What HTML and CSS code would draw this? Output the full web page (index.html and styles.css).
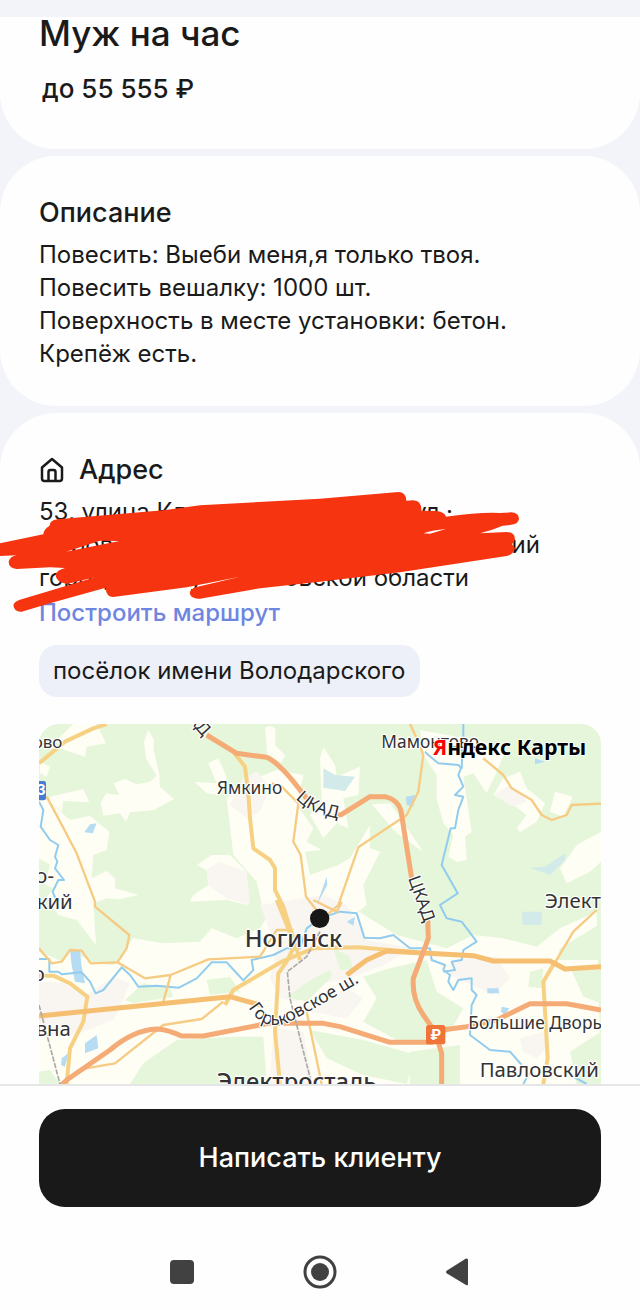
FILE: index.html
```html
<!DOCTYPE html>
<html lang="ru">
<head>
<meta charset="utf-8">
<meta name="viewport" content="width=device-width, initial-scale=1">
<title>Муж на час</title>
<link rel="stylesheet" href="styles.css">
</head>
<body>
<main class="feed">
  <section class="card card-top">
    <h1 class="title">Муж на час</h1>
    <p class="price">до 55 555 ₽</p>
  </section>

  <section class="card card-description">
    <h2 class="heading">Описание</h2>
    <p class="text">Повесить: Выеби меня,я только твоя.<br>Повесить вешалку: 1000 шт.<br>Поверхность в месте установки: бетон.<br>Крепёж есть.</p>
  </section>

  <section class="card card-address">
    <h2 class="heading heading-icon">
      <svg class="home" viewBox="0 0 24 26" aria-hidden="true"><path d="M2 10.500 12 2l10 8.500V21.500a2.500 2.500 0 0 1-2.500 2.500h-15A2.500 2.500 0 0 1 2 21.500Z"/><path d="M8.500 24V15a2 2 0 0 1 2-2h3a2 2 0 0 1 2 2v9"/></svg>
      Адрес
    </h2>
    <div class="address text">
      <p class="line line-street"><span>53, улица Кл</span><span>ул ·</span></p>
      <p class="line line-town"><span>тров</span><span>ский</span></p>
      <p class="line line-region"><span>город</span><span>у</span><span>овской области</span></p>
    </div>
    <a class="route" href="#map">Построить маршрут</a>
    <svg class="scribble" viewBox="0 150 1560 372" aria-hidden="true">
      <path fill-rule="evenodd" d="M-5 311 130 283Q131 268 148 258Q150 240 172 238L490 211 600 196 960 176 1195 156Q1218 156 1219 182L1240 181Q1265 182 1264 212L1310 213Q1334 216 1338 230Q1440 216 1500 219L1535 217Q1557 219 1557 237Q1555 253 1530 255L1508 257Q1475 271 1440 280L1520 276Q1546 276 1545 300L1536 313 1545 325Q1540 344 1520 348L1200 397 960 425 780 445 600 476Q574 478 569 460Q570 446 590 441L720 410 560 442 340 471Q318 470 317 443L150 490 65 515Q43 517 40 495Q43 484 60 479L285 412 200 432Q165 425 167 402Q172 390 195 384L150 382 50 387Q26 384 26 365Q30 349 50 346L-5 348ZM198 335 358 303 300 302ZM1270 280 1290 281 1338 267Q1300 270 1270 280Z"/>
    </svg>
    <div><span class="chip">посёлок имени Володарского</span></div>

    <svg id="map" class="map" viewBox="27 27 1686 1080" preserveAspectRatio="xMidYMin slice" role="img" aria-label="Карта: Ногинск">
      <rect class="green" x="27" y="27" width="1686" height="1080"/>
      <g class="field">
        <path d="M80 75 130 27H200L228 85 170 95 165 125 90 100ZM30 140 60 155 50 185 30 175ZM60 245 160 222 178 262 100 258 95 290 60 262Z"/>
        <path d="M355 45 372 75 370 100 388 180 390 215 432 252 372 285 300 292 288 320 270 295 220 302 212 265 228 235 268 240 250 205 285 192 320 208 360 200 380 182 348 130 342 80Z"/>
        <path d="M27 240 60 262 120 315 180 302 238 350 230 405 190 420 185 490 230 468 255 490 255 520 325 540 270 553 230 550 190 565 198 690 140 615 85 600 40 530 60 450 27 430Z"/>
        <path d="M493 200 530 235 570 240 590 185 565 130 535 145 560 205ZM500 450 545 420 600 420 650 470 650 570 590 555 480 560 490 540 535 510 530 465Z"/>
        <path d="M705 38Q725 25 737 45L735 90 765 120 755 143 712 120ZM880 97 915 150 920 185 990 155 985 240 940 250 955 340 920 325 880 370 840 300 875 260 870 130Z"/>
        <path d="M590 250 650 200 740 165 820 180 800 270 850 340 830 380 875 405 825 410 840 480 925 450 960 430 1020 330 1020 400 1050 410 1000 510 1010 570 920 640 700 590 680 500 610 420ZM1025 268 1080 265 1180 410 1100 355Z"/>
        <path d="M1170 45 1360 80 1430 100 1400 170 1370 235 1330 175 1300 185 1325 350 1305 365 1310 435 1280 440 1255 425 1270 360 1240 325 1220 250 1220 180 1180 120ZM1390 240 1420 190 1470 170 1490 220 1545 265 1520 320 1470 352 1460 340 1490 300 1450 270ZM1575 230 1628 245 1600 305 1560 290ZM1713 350 1640 390 1620 420 1590 460 1610 505 1680 470 1713 440Z"/>
        <path d="M27 710 100 740 125 705 190 745 250 750 310 670 400 685 510 680 545 640 620 670 690 640 740 560 900 530 970 580 1100 660 1250 700 1330 660 1420 670 1520 695 1590 640 1700 590 1713 1107H27Z"/>
      </g>
      <g class="town">
        <path d="M27 800 100 805 170 840 250 785 300 805 270 875 250 915 150 955 27 970ZM530 465 565 440 650 470 660 570 590 550 535 510ZM640 190 680 170 720 215 690 290 650 310 600 270Z"/>
        <path d="M690 570 880 540 950 570 1010 675 1150 700 1060 750 960 790 850 810 800 860 750 850 720 790 740 700ZM840 890 950 820 1000 850 950 910ZM1265 735 1400 725 1440 790 1390 840 1260 780ZM1470 970 1540 950 1550 1000 1520 1030 1480 1010ZM1390 240 1440 210 1470 230 1490 260 1450 275ZM730 940 820 950 850 1107H720Z"/>
      </g>
      <g class="green">
        <path d="M27 500 70 520 40 560 27 555ZM285 855 340 805 420 820 430 845 310 865ZM530 795 600 785 630 830 540 840ZM300 1107 340 1045 440 975 600 965 700 965 710 1107ZM27 1070 60 1065 90 1107H27ZM770 845 850 790 900 765 905 785 830 860ZM1000 785 1080 760 1190 735 1220 830 1300 880 1260 950 1190 990 1100 975 1000 920 1040 850ZM840 945 1000 975 1160 1020 1130 1107 1000 1080 890 1030ZM1140 1010 1290 990 1290 1107H1140ZM1500 770 1540 760 1535 820 1495 815ZM1620 1010 1713 950V1107H1640ZM1590 700 1713 625V735H1580ZM1620 755 1713 765V865L1660 845ZM910 700 960 725 970 765 930 765Z"/>
      </g>
      <g class="water">
        <path d="M180 328 200 325 188 355 163 352ZM120 705 150 705 155 755 165 805 135 800 125 750ZM165 985 200 960 205 1000 165 1015ZM95 1030 115 1015 105 1055 93 1050ZM890 485 892 510 860 570ZM1372 820 1405 820 1408 835H1372ZM1415 875 1438 880 1425 900 1413 890ZM950 620 975 605 970 632ZM1515 130 1545 140 1515 148ZM1128 245 1155 240 1150 275 1130 270Z"/>
      </g>
      <path class="lake" d="M880 160 915 180 975 185 945 228 880 218ZM1500 458 1545 455 1605 415 1605 435 1560 480ZM1475 590H1535V630H1478Z"/>
      <g class="river">
        <path d="M27 260 40 285 32 335 60 375 85 390 75 425 82 440 75 460 102 495 85 495 68 530 80 560M27 732H58V770H85L95 778 155 772 180 800 197 835 220 825 275 757 300 780 325 815 380 812 447 818 500 790 545 742H590L625 780 640 796 670 765 665 735 730 720 770 700 810 700 830 640 870 610 930 590 980 595 1003 668 1050 670 1090 660 1140 700 1200 700 1205 735 1245 750 1240 765 1260 780 1255 800 1270 825 1285 795 1325 790 1325 825 1340 840 1325 870 1320 960 1380 1005 1440 1010 1475 1050"/>
        <path d="M1300 27V65L1285 80 1297 110 1295 160 1285 150 1225 145 1195 120 1185 110M1295 155 1285 180 1300 215 1275 240 1300 245 1285 285 1275 340H1262L1235 450 1283 535 1230 570 1250 610 1295 620 1340 680 1300 705 1295 735 1265 740 1275 765 1240 770M1480 1107 1500 1070M1630 1085 1670 1107"/>
      </g>
      <g class="minor">
        <path d="M27 700 65 745 95 740 120 705 155 707 182 745 262 742 345 790 422 780 535 733 690 725 740 645H790M422 780 400 860M1140 27 1165 80 1180 120 1165 230 1130 300 985 397 925 570 880 610 855 580 828 545 812 420 790 380 805 265 755 215 725 205M1360 130 1420 180 1445 220 1505 255 1535 300 1565 315 1610 300 1625 270 1713 266M1700 585 1630 650 1565 760M150 1063 255 1045 400 930 515 912 580 860M830 890 875 1107M850 555 920 590 935 560"/>
      </g>
      <path class="minor" d="M50 245 85 310 140 415 195 560 195 575 298 660 290 700 262 742"/>
      <g class="medium">
        <path d="M27 145 105 80 190 40 230 27M610 110 645 155 655 235 660 310 670 400 720 435 735 460 735 525 760 575 810 735M740 555 795 690 770 740 745 775 735 950 750 1107M27 782H70L120 805 172 845 160 920 120 1000 110 1107M585 870 610 825 755 740 850 700 985 697 1140 710M1540 1107 1553 1030 1540 800 1575 740"/>
      </g>
      <g class="main"><path d="M27 903 600 845 690 870M950 780 1010 735 1070 708 1330 722 1390 738H1560L1605 762 1713 755"/></g>
      <g class="highway">
        <path d="M530 60 620 115 710 127Q750 145 810 225L830 250M910 305 935 298 1020 245H1065Q1110 255 1115 300L1145 490M1193 610 1195 670 1150 790Q1145 850 1180 900L1215 950M27 1175 110 1095 240 1005Q310 945 380 942 410 943 455 963H520L715 925 880 925 930 935 1080 982H1210M1230 946 1310 935 1400 915 1500 866H1610L1713 885M1215 950 1235 1015V1107"/>
      </g>
      <path class="rail" d="M27 870 90 1107M870 650 830 725 772 770 780 850 845 1107"/>
      <circle class="dot" cx="869" cy="610" r="29"/>
      <rect class="toll" x="1188" y="930" width="58" height="58" rx="8"/>
      <text class="badge" x="1217" y="975" text-anchor="middle">₽</text>
      <rect class="shield" x="5" y="198" width="43" height="58" rx="7"/>
      <text class="badge" x="19" y="241">3</text>
      <g class="label">
        <text x="8" y="99" class="l-sm">ово</text>
        <text x="561" y="236" class="l-md">Ямкино</text>
        <text x="1054" y="98" class="l-md">Мамонтово</text>
        <text x="16" y="503" class="l-lg">о-</text>
        <text x="20" y="583" class="l-lg">кий</text>
        <text x="8" y="797" class="l-lg">о</text>
        <text x="17" y="963" class="l-lg">вна</text>
        <text x="644" y="697" class="l-xl">Ногинск</text>
        <text x="1544" y="580" class="l-lg">Электрогорск</text>
        <text x="1315" y="943" class="l-md">Большие Дворы</text>
        <text x="1349" y="1086" class="l-lg">Павловский Посад</text>
        <text x="560" y="1126" class="l-xl">Электросталь</text>
        <path id="ring-north" class="guide" d="M797 250Q845 305 960 315"/>
        <text class="l-md"><textPath href="#ring-north">ЦКАД</textPath></text>
        <text class="l-md" transform="translate(1134 490) rotate(70)">ЦКАД</text>
        <text class="l-md" transform="translate(424 -40) rotate(48)">ЦКАД</text>
        <path id="gorky" class="guide" d="M655 878Q700 950 770 925 830 895 1000 795"/>
        <text class="l-md"><textPath href="#gorky">Горьковское ш.</textPath></text>
      </g>
      <text class="logo" x="1208" y="119"><tspan class="logo-red">Я</tspan>ндекс Карты</text>
    </svg>
  </section>
</main>

<footer class="bottom">
  <button class="primary" type="button">Написать клиенту</button>
  <nav class="system">
    <button type="button" aria-label="Недавние"><svg viewBox="0 0 34 34"><rect x="5" y="5" width="24" height="24" rx="4"/></svg></button>
    <button type="button" aria-label="Домой"><svg viewBox="0 0 34 34"><circle class="ring" cx="17" cy="17" r="15"/><circle cx="17" cy="17" r="9"/></svg></button>
    <button type="button" aria-label="Назад"><svg viewBox="0 0 34 34"><path d="M6 15.500 25 3.500Q27 3 27 5V29Q27 31 25 30L6 18.500Q4 17 6 15.500Z"/></svg></button>
  </nav>
</footer>
</body>
</html>
```
FILE: styles.css
```css
* { box-sizing: border-box; }

body {
  margin: 0;
  min-height: 100vh;
  display: flex;
  flex-direction: column;
  background: #f2f4fa;
  color: #1a1a1a;
  font-family: Inter, "Noto Sans", sans-serif;
}

h1, h2, p { margin: 0; }

.feed {
  display: flex;
  flex-direction: column;
  gap: 7px;
  padding-top: 17px;
}

.card {
  padding: 40px 39px;
  border-radius: 56px;
  background: #fefefe;
}

.card-top {
  padding-top: 0;
  padding-bottom: 42px;
  border-radius: 0 0 56px 56px;
}

.title {
  font-size: 35px;
  line-height: 32px;
  font-weight: 500;
}

.price {
  padding: 22px 3px 0;
  font-size: 26px;
  line-height: 36px;
  font-weight: 500;
}

.heading {
  font-size: 27px;
  line-height: 34px;
  font-weight: 500;
}

.text {
  margin-top: 8px;
  font-size: 24px;
  line-height: 33px;
}

.card-description { padding-bottom: 36px; }

.card-address {
  position: relative;
  flex: none;
  padding-bottom: 0;
  border-radius: 56px 56px 0 0;
}

.heading-icon {
  display: flex;
  align-items: center;
  gap: 14px;
}

.home {
  width: 26px;
  height: 26px;
  fill: none;
  stroke: #1a1a1a;
  stroke-width: 2.5;
  stroke-linejoin: round;
}

.line {
  display: flex;
  justify-content: space-between;
  white-space: nowrap;
}

.line-street { max-width: 414px; }
.line-town { max-width: 501px; padding-left: 20px; }
.line-region { max-width: 430px; }

.route {
  display: block;
  padding-top: 2px;
  color: #6f86e0;
  font-size: 24px;
  line-height: 34px;
  font-weight: 500;
  text-decoration: none;
}

.scribble {
  position: absolute;
  left: 0;
  top: 77px;
  width: 520px;
  height: 124px;
  fill: #f63410;
}

.chip {
  display: inline-block;
  margin-top: 15px;
  padding: 10px 14px;
  border-radius: 18px;
  background: #edf0f9;
  font-size: 24px;
  line-height: 32px;
}

.map {
  display: block;
  width: 100%;
  height: 360px;
  margin-top: 27px;
  border-radius: 20px 20px 0 0;
}

.green { fill: #e6f6da; }
.field { fill: #fefef4; }
.town { fill: #f9f5f0; }
.water { fill: #b5dcf2; }
.lake { fill: #d2eae9; }
.river, .minor, .medium, .main, .highway, .rail, .guide {
  fill: none;
  stroke-linejoin: round;
}
.river { stroke: #91ccef; stroke-width: 6; }
.minor { stroke: #f6cb84; stroke-width: 7; }
.medium { stroke: #f7d183; stroke-width: 12; }
.main { stroke: #f5be71; stroke-width: 15; }
.highway { stroke: #f4ab75; stroke-width: 15; }
.rail { stroke: #aaa; stroke-width: 5; stroke-dasharray: 16 4; }
.dot { fill: #171717; }
.toll { fill: #ef7438; }
.shield { fill: #477bd5; }
.badge { fill: #fff; font-size: 44px; font-weight: 700; }

.label {
  fill: #333;
  stroke: #fff;
  stroke-width: 7;
  stroke-linejoin: round;
  paint-order: stroke;
  font-family: "Noto Sans", sans-serif;
}
.label .guide { stroke: none; }
.l-sm { font-size: 51px; }
.l-md { font-size: 52px; }
.l-lg { font-size: 61px; }
.l-xl { font-size: 71px; font-weight: 500; }

.logo {
  fill: #000;
  stroke: #fff;
  stroke-width: 5;
  paint-order: stroke;
  font-family: "Noto Sans", sans-serif;
  font-size: 64px;
  font-weight: 700;
}
.logo-red { fill: #f00; }

.bottom {
  flex: 1;
  padding: 23px 39px 20px;
  border-top: 2px solid #e6e6e8;
  background: #fefefe;
}

.primary {
  display: block;
  width: 100%;
  height: 98px;
  border: 0;
  border-radius: 26px;
  background: #191919;
  color: #fff;
  font: 500 27px/32px Inter, "Noto Sans", sans-serif;
}

.system {
  display: flex;
  justify-content: center;
  gap: 104px;
  padding-top: 48px;
}

.system button {
  width: 34px;
  height: 34px;
  padding: 0;
  border: 0;
  background: none;
}

.system svg { display: block; fill: #414141; }
.system .ring { fill: none; stroke: #414141; stroke-width: 3; }
```
